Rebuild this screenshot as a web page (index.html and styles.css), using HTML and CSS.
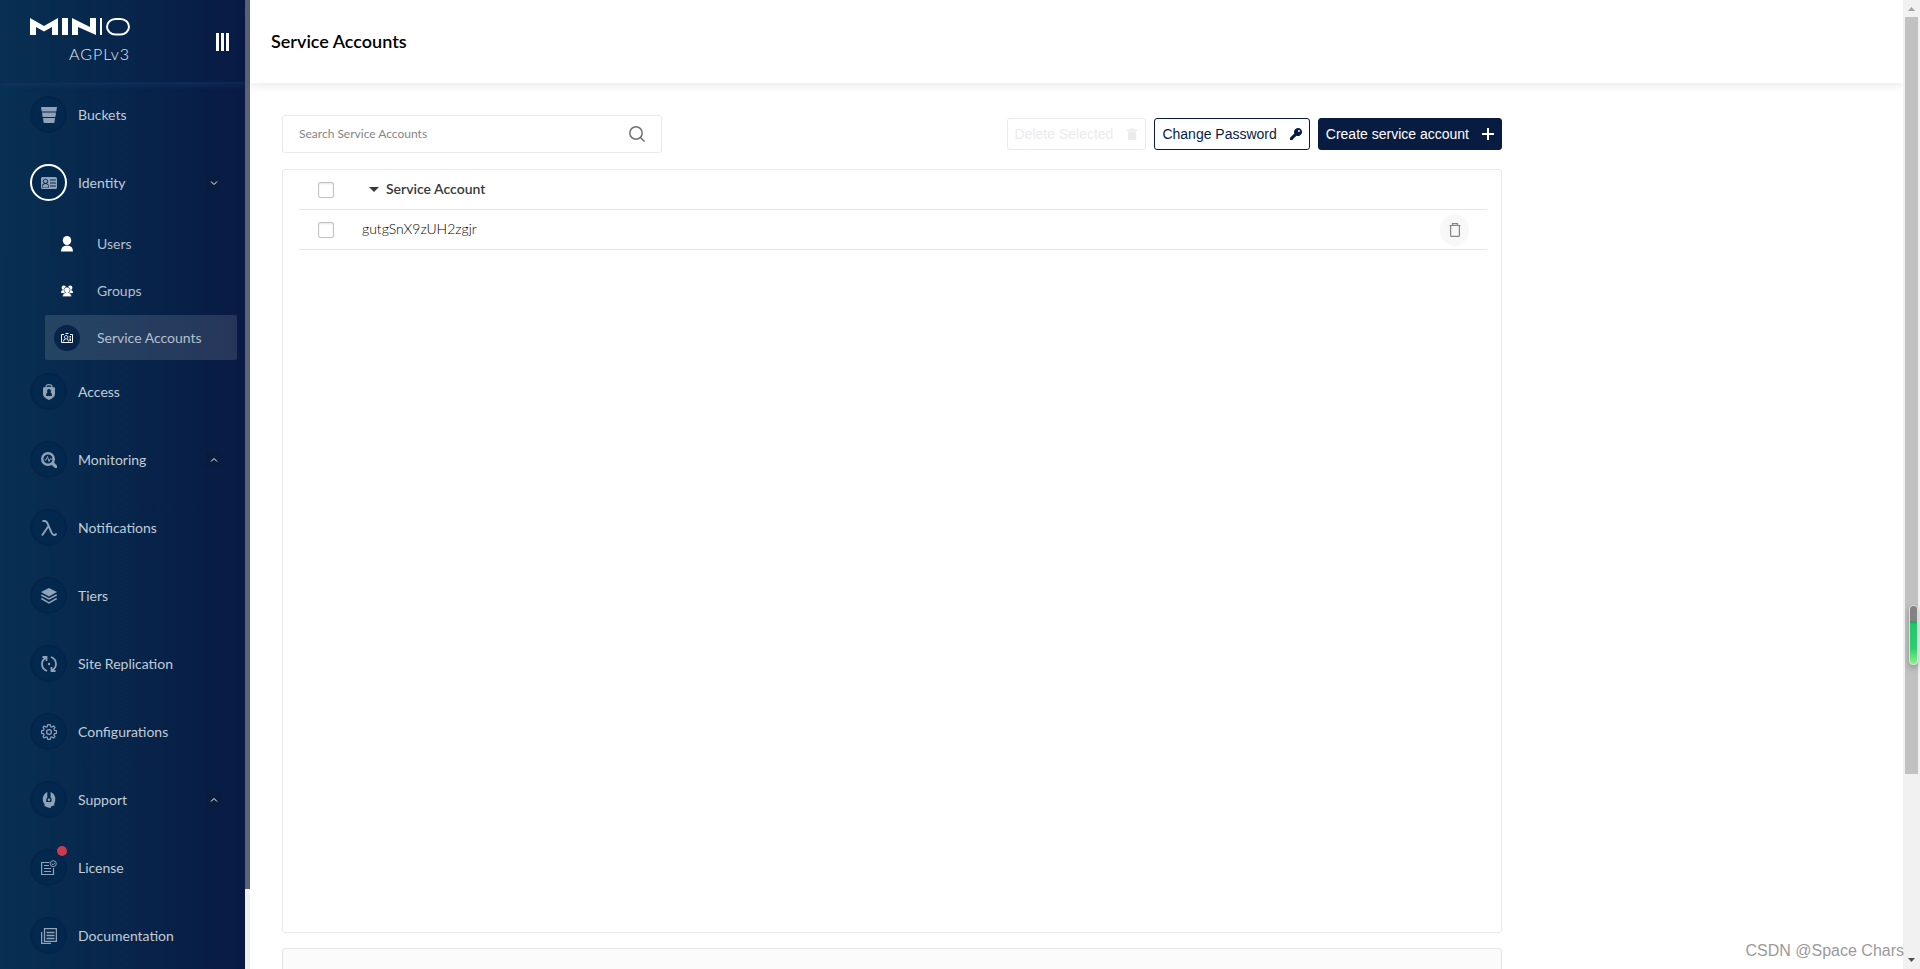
FILE: index.html
```html
<!DOCTYPE html>
<html lang="en">
<head>
<meta charset="utf-8">
<title>Service Accounts</title>
<link rel="stylesheet" href="styles.css">
</head>
<body>
<div class="app">
  <aside class="sidebar">
    <div class="brand">
      <div class="brand-mark">
        <svg class="logo" width="100" height="18" viewBox="0 0 100 18" role="img" aria-label="MINIO">
          <path fill="#fff" d="M0 0L14 8L28 0V17H22V9L14 13.500L6 9V17H0ZM32 0H38V17H32ZM42 0L60 9V0H66V17L48 9V17H42ZM70 0H72V17H70Z"/>
          <rect x="77" y="1" width="22" height="15.500" rx="8.500" ry="7.750" fill="none" stroke="#fff" stroke-width="2"/>
        </svg>
        <span class="edition">AGPLv3</span>
      </div>
      <button class="collapse" aria-label="Collapse menu"><i></i><i></i><i></i></button>
    </div>
    <nav class="nav">
      <a class="item" href="#"><span class="disc"><svg viewBox="0 0 16 16"><path d="M0 0H16L15.300 4.500H.7ZM1 5.500H15L14.400 10H1.600ZM1.900 11H14.100L13.300 16H2.700Z"/></svg></span><span class="label">Buckets</span></a>
      <a class="item open" href="#"><span class="disc"><svg viewBox="0 0 16 16"><path fill-rule="evenodd" d="M1.500 2H14.500Q16 2 16 3.500V12.500Q16 14 14.500 14H1.500Q0 14 0 12.500V3.500Q0 2 1.500 2ZM1.200 3.200V12.800H8V11Q7.500 9 5.800 8.600A2.500 2.500 0 1 0 3.200 8.600Q1.500 9 1.200 10ZM9 4.500V5.500H14.800V4.500ZM9 7.500V8.500H14.800V7.500ZM9 10.500V11.500H14.800V10.500Z"/><path d="M1.500 12.500Q1.500 9 4.500 9T7.500 12.500Z"/><circle cx="4.500" cy="6.300" r="1.700"/></svg></span><span class="label">Identity</span><span class="chev"><svg viewBox="0 0 8 8"><path d="M1 2.500L4 5.500L7 2.500"/></svg></span></a>
      <div class="submenu">
        <a class="subitem" href="#"><span class="dot"><svg viewBox="0 0 12 16"><ellipse cx="6" cy="4.500" rx="4.200" ry="4.500"/><path d="M0 15.500Q0 9.500 6 9.500T12 15.500Z"/></svg></span><span class="label">Users</span></a>
        <a class="subitem" href="#"><span class="dot"><svg viewBox="0 0 12 12"><circle cx="2.800" cy="2.800" r="2.200"/><circle cx="9.200" cy="2.800" r="2.200"/><path d="M0 8Q0 5 2.500 5H4V8ZM12 8Q12 5 9.500 5H8V8Z"/><path stroke="#08284b" stroke-width=".6" d="M1.500 11.700Q1.500 8 4.500 7.500Q3 6.500 3 4.500Q3.300 2 6 2T9 4.500Q9 6.500 7.500 7.500Q10.500 8 10.500 11.700Z"/></svg></span><span class="label">Groups</span></a>
        <a class="subitem current" href="#"><span class="dot"><svg viewBox="0 0 12 12"><path fill="none" stroke="#fff" d="M3 2.500H.5V10.500H11.500V2.500H9"/><path fill="none" stroke="#fff" stroke-width=".9" d="M2.500 9.500Q2.500 7 4.700 6.800A1.700 1.700 0 1 1 5.600 6.800Q7.500 7 7.500 9.500"/><path d="M4.500 1H7.500V2H4.500ZM8.500 4H10V5.500H8.500ZM8.500 6.500H10V9H8.500Z"/></svg></span><span class="label">Service Accounts</span></a>
      </div>
      <a class="item" href="#"><span class="disc"><svg viewBox="0 0 16 16"><path fill="none" stroke="#8fa2b7" stroke-width="1.200" d="M5 3V2.500Q5 .6 8 .6T11 2.500V3"/><path fill-rule="evenodd" d="M2 3.500Q8 2 14 3.500V10Q14 13.500 8 16Q2 13.500 2 10ZM8 5A2 2 0 0 0 6.500 8.300Q5 9 5 12H11Q11 9 9.500 8.300A2 2 0 0 0 8 5Z"/></svg></span><span class="label">Access</span></a>
      <a class="item" href="#"><span class="disc"><svg viewBox="0 0 16 16"><circle cx="7" cy="7" r="5.800" fill="none" stroke="#8fa2b7" stroke-width="2.400"/><path fill="none" stroke="#8fa2b7" d="M3.500 8H5L6.500 4.500L8 9.500L9 7H14"/><path d="M9.500 12L12 9.500L16 13.500V16H14Z"/></svg></span><span class="label">Monitoring</span><span class="chev"><svg viewBox="0 0 8 8"><path d="M1 5.500L4 2.500L7 5.500"/></svg></span></a>
      <a class="item" href="#"><span class="disc"><svg viewBox="0 0 16 16"><path fill="none" stroke="#8fa2b7" stroke-width="1.900" d="M1.500 1H3.500Q5.500 1 6.500 3.500L10.500 12.500Q11.500 15 13.500 15Q15 15 15.200 13.500M7.500 6L1 15.500"/></svg></span><span class="label">Notifications</span></a>
      <a class="item" href="#"><span class="disc"><svg viewBox="0 0 16 16"><path d="M8 0L16 4L8 8.500L0 4Z"/><path fill="none" stroke="#8fa2b7" stroke-width="1.500" d="M.3 7L8 11L15.700 7M.3 10.500L8 15L15.700 10.500"/></svg></span><span class="label">Tiers</span></a>
      <a class="item" href="#"><span class="disc"><svg viewBox="0 0 16 16"><path fill="none" stroke="#8fa2b7" stroke-width="1.800" d="M6 15Q1 13 1 8Q1 4 5 1.500M1.500 1H5.500V5M10 1Q15 3 15 8Q15 12 11 14.500M14.500 15H10.500V11"/><circle cx="8" cy="8" r="1.200"/></svg></span><span class="label">Site Replication</span></a>
      <a class="item" href="#"><span class="disc"><svg viewBox="0 0 16 16"><path fill="none" stroke="#8fa2b7" stroke-width="1.200" stroke-linejoin="round" d="M6.700 .6H9.300L9.700 2.600L11 3.100L12.700 2L14 3.300L12.900 5L13.400 6.300L15.400 6.700V9.300L13.400 9.700L12.900 11L14 12.700L12.700 14L11 12.900L9.700 13.400L9.300 15.400H6.700L6.300 13.400L5 12.900L3.300 14L2 12.700L3.100 11L2.600 9.700L.6 9.300V6.700L2.600 6.300L3.100 5L2 3.300L3.300 2L5 3.100L6.300 2.600Z"/><circle cx="8" cy="8" r="2.400" fill="none" stroke="#8fa2b7" stroke-width="1.300"/></svg></span><span class="label">Configurations</span></a>
      <a class="item" href="#"><span class="disc"><svg viewBox="0 0 16 16"><path fill-rule="evenodd" d="M6.300 0V5.500Q5.300 6.300 5.300 8L5 10.500L8 10.500L9 13L11 12.500L10 10Q11 9 10.600 7Q10.500 6 9.600 5.500V0Q13.500 1.500 14.300 6Q14.500 10 13.300 11.500V13.500L10.500 14L9.500 16L7 15.500L3.500 14V12Q1.500 10 1.700 6.500Q2.500 1.500 6.300 0Z"/><circle cx="8" cy="7.800" r="1.300"/><path d="M4.500 10H11.500V14H4.500Z"/></svg></span><span class="label">Support</span><span class="chev"><svg viewBox="0 0 8 8"><path d="M1 5.500L4 2.500L7 5.500"/></svg></span></a>
      <a class="item" href="#"><span class="disc"><svg viewBox="0 0 16 16"><path fill="none" stroke="#8fa2b7" stroke-width="1.200" d="M8.500 2.500H.6V14.500H12.500V8M3 5.500H8M3 8.500H10M3 11.500H10"/><circle cx="12.300" cy="3.700" r="3" fill="none" stroke="#8fa2b7"/><path fill="none" stroke="#8fa2b7" d="M10.800 3.700L12 4.800L14 2.800"/></svg><i class="alert"></i></span><span class="label">License</span></a>
      <a class="item" href="#"><span class="disc"><svg viewBox="0 0 16 16"><path fill="none" stroke="#8fa2b7" stroke-width="1.300" d="M3.500 .6H15.400V13.400H3.500ZM.6 4V15.400H10M5.500 4.500H13.500M5.500 7.500H13.500M5.500 10.500H13.500"/></svg></span><span class="label">Documentation</span></a>
    </nav>
  </aside>
  <div class="side-scroll"><i></i></div>
  <main class="main">
    <header class="header"><h1>Service Accounts</h1></header>
    <div class="content">
      <div class="toolbar">
        <label class="search">
          <input type="text" placeholder="Search Service Accounts" aria-label="Search Service Accounts">
          <svg width="16" height="16" viewBox="0 0 16 16"><circle cx="7" cy="7" r="6.200"/><path d="M11.500 11.500L15.500 15.500"/></svg>
        </label>
        <div class="actions">
          <button class="btn" disabled>Delete Selected<svg width="12" height="12" viewBox="0 0 12 12"><path d="M1 1.500H4L4.500 .5H8L8.500 1.500H11V3H1ZM2 3.500H10.200V12H2Z"/></svg></button>
          <button class="btn">Change Password<svg width="12" height="12" viewBox="0 0 12 12"><path fill-rule="evenodd" d="M8 0A4 4 0 0 0 4.300 5.500L0 9.800V12H2.500L3.500 10.500L6.500 7.700A4 4 0 1 0 8 0ZM9 2A1 1 0 1 1 9 4A1 1 0 0 1 9 2Z"/></svg></button>
          <button class="btn primary">Create service account<svg width="12" height="12" viewBox="0 0 12 12"><path d="M5 0H7V5H12V7H7V12H5V7H0V5H5Z"/></svg></button>
        </div>
      </div>
      <section class="panel">
        <table class="accounts">
          <thead>
            <tr><th class="pick"><input type="checkbox" aria-label="Select all"></th><th class="name" scope="col"><svg class="caret" width="10" height="5" viewBox="0 0 10 5"><path d="M0 0H10L5 5Z"/></svg>Service Account</th><th class="act"></th></tr>
          </thead>
          <tbody>
            <tr><td class="pick"><input type="checkbox" aria-label="Select gutgSnX9zUH2zgjr"></td><td class="name">gutgSnX9zUH2zgjr</td><td class="act"><button class="trash" aria-label="Delete"><svg width="12" height="14" viewBox="0 0 12 14"><path d="M.5 2.500H11.500M3.500 2V.6H8.500V2M1.600 3V12.500Q1.600 13.400 2.500 13.400H9.500Q10.400 13.400 10.400 12.500V3"/></svg></button></td></tr>
          </tbody>
        </table>
      </section>
      <section class="help"></section>
    </div>
  </main>
  <div class="page-scroll"><svg width="7" height="4" viewBox="0 0 7 4"><path fill="#a3a3a3" d="M0 4L3.500 0L7 4Z"/></svg><div class="rail"><i></i></div><svg width="7" height="4" viewBox="0 0 7 4"><path fill="#505050" d="M0 0H7L3.500 4Z"/></svg></div>
  <div class="gauge"></div>
  <div class="watermark">CSDN @Space Chars</div>
</div>
</body>
</html>
```
FILE: styles.css
```css
* { box-sizing: border-box; }
body { margin: 0; font-family: Lato, "Liberation Sans", sans-serif; color: #393939; background: #fff; }
button, input { font-family: inherit; }
.app { position: relative; display: flex; height: 100vh; overflow: hidden; }

.sidebar { width: 245px; flex: none; overflow: hidden; background: linear-gradient(90deg, #073052 0%, #081a44 100%); }
.brand { display: flex; justify-content: space-between; align-items: flex-start; height: 83px; padding: 18px 16px 0 30px; box-shadow: inset 0 -1px 0 #0b2b52, 0 2px 6px rgba(40, 75, 125, .35); }
.brand-mark { display: flex; flex-direction: column; align-items: flex-end; }
.logo { display: block; }
.edition { margin-top: 8px; font: 300 16px/20px Lato, sans-serif; letter-spacing: 1px; color: #e2eaf3; }
.collapse { display: flex; gap: 2px; margin-top: 15px; padding: 0; border: 0; background: none; }
.collapse i { width: 3px; height: 18px; background: #fff; }

.nav { display: flex; flex-direction: column; padding-top: 13px; }
.item { display: flex; align-items: center; height: 37px; margin-bottom: 31px; padding: 0 24px 0 30px; color: #c1ccd7; font-size: 14px; text-decoration: none; }
.disc { position: relative; display: flex; align-items: center; justify-content: center; width: 37px; height: 37px; margin-right: 11px; border: 2px solid #04244a; border-radius: 50%; background: #03284d; }
.disc svg { width: 16px; height: 16px; fill: #8fa2b7; }
.open .disc { border-color: #fff; }
.open { margin-bottom: 20px; }
.alert { position: absolute; top: -5px; right: -2px; width: 10px; height: 10px; border-radius: 50%; background: #c83b51; }
.chev { display: flex; align-items: center; justify-content: center; width: 15px; height: 15px; margin-left: auto; border-radius: 2px; background: #081c3e; }
.chev svg { width: 8px; height: 8px; fill: none; stroke: #fff; stroke-width: 1; }
.submenu { display: flex; flex-direction: column; gap: 2px; margin: 0 8px 13px 45px; }
.subitem { display: flex; align-items: center; height: 45px; padding-left: 9px; border-radius: 2px; color: #b4c0cd; font-size: 14px; text-decoration: none; }
.current { background: rgba(255, 255, 255, .12); }
.dot { display: flex; align-items: center; justify-content: center; width: 26px; height: 26px; margin-right: 17px; border-radius: 50%; }
.current .dot { background: #08244a; }
.dot svg { width: 12px; fill: #fff; }
.side-scroll { width: 5px; flex: none; background: #f0f0f0; }
.side-scroll i { display: block; height: 889px; background: #5a6378; }

.main { flex: 1; min-width: 0; background: #fff; }
.header { display: flex; align-items: center; height: 83px; padding: 0 0 2px 21px; box-shadow: 0 2px 10px rgba(0, 0, 0, .1); }
.header h1 { margin: 0; font-size: 18px; font-weight: 600; color: #000; }
.content { max-width: 1252px; padding: 32px 0 0 32px; }
.toolbar { display: flex; justify-content: space-between; align-items: center; margin-bottom: 16px; }
.search { display: flex; align-items: center; width: 380px; height: 38px; padding: 0 16px; border: 1px solid #eaeaea; border-radius: 3px; }
.search input { flex: 1; min-width: 0; padding: 0 0 2px; border: 0; outline: 0; font-size: 12px; background: none; }
.search input::placeholder { color: #858585; opacity: 1; }
.search svg { fill: none; stroke: #707070; stroke-width: 1.5; }
.actions { display: flex; gap: 8px; }
.btn { display: flex; align-items: center; justify-content: space-between; gap: 13px; height: 32px; padding: 0 7px; border: 1px solid #081c42; border-radius: 3px; background: #fff; color: #081c42; font: 14px "Liberation Sans", Arial, sans-serif; }
.btn svg { fill: currentColor; }
.btn:disabled { border-color: #eaeaea; color: #ebebeb; }
.primary { background: #081c42; color: #fff; }
.panel { height: 764px; padding: 0 14px 0 16px; border: 1px solid #eaeaea; border-radius: 3px; }
.accounts { width: 100%; border-spacing: 0; table-layout: fixed; }
.accounts th, .accounts td { height: 40px; padding: 0; border-bottom: 1px solid #e6e6e6; text-align: left; font-size: 14px; }
.accounts td { font-weight: 300; color: #000; }
.accounts th { font-weight: 600; }
.accounts .pick { width: 63px; padding-left: 19px; }
.pick input { display: block; appearance: none; width: 16px; height: 16px; margin: 0; border: 1px solid #c3c3c3; border-radius: 2px; background: #fff; box-shadow: inset 0 1px 2px #e4e4e4; }
.accounts .act { width: 47px; }
.accounts .name { padding-bottom: 2px; }
.caret { margin: 0 7px 2px 7px; fill: #393939; }
.trash { display: flex; align-items: center; justify-content: center; width: 29px; height: 32px; padding: 0; border: 0; border-radius: 50%; background: #f8f8f8; }
.trash svg { fill: none; stroke: #858585; stroke-width: 1.2; }
.help { height: 60px; margin-top: 15px; border: 1px solid #e5e5e5; border-radius: 3px; background: #fbfbfb; }

.page-scroll { display: flex; flex-direction: column; align-items: center; width: 17px; flex: none; padding: 7px 0; background: #f1f1f1; }
.page-scroll svg { flex: none; }
.rail { flex: 1; align-self: stretch; padding: 6px 2px 0; }
.rail i { display: block; width: 13px; height: 757px; background: #c1c1c1; }
.gauge { position: absolute; top: 605px; right: 2px; width: 9px; height: 60px; border: 1px solid #ddd; border-radius: 4px; background: linear-gradient(#828282 0 15px, #18b25f 15px 17px, #1ec96b 18px, #2ecc71 42px, #85f584 58px); box-shadow: 0 3px 6px rgba(0, 0, 0, .25); }
.watermark { position: absolute; right: 16px; bottom: 8px; font: 16px/20px "Liberation Sans", Arial, sans-serif; color: #9a9a9a; text-shadow: -1px -1px 0 #fff; }
```
